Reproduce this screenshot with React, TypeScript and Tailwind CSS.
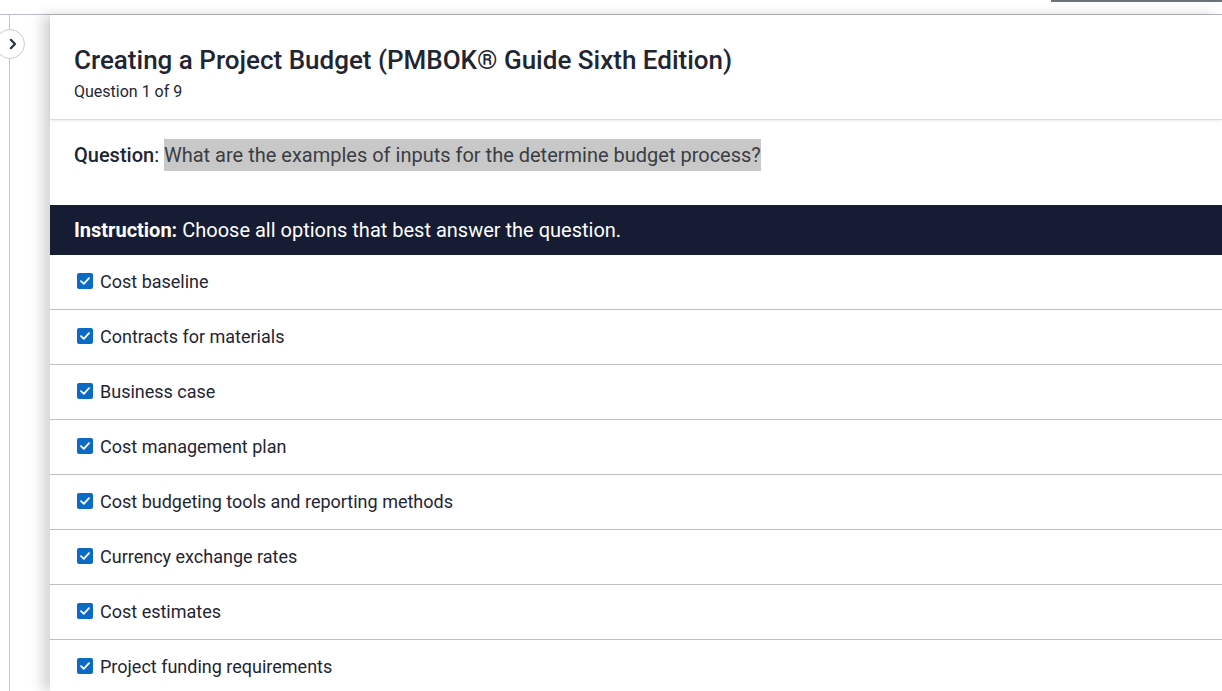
import React from "react";

const options = [
  "Cost baseline",
  "Contracts for materials",
  "Business case",
  "Cost management plan",
  "Cost budgeting tools and reporting methods",
  "Currency exchange rates",
  "Cost estimates",
  "Project funding requirements",
];

function Check() {
  return (
    <span className="flex h-[16px] w-[16px] shrink-0 items-center justify-center rounded-[2px] bg-[#0b6bc4]">
      <svg width="10" height="8" viewBox="0 0 10 8" fill="none">
        <path d="M1 4.2 L3.8 6.8 L9 1.2" stroke="white" strokeWidth="1.8" strokeLinecap="round" strokeLinejoin="round" />
      </svg>
    </span>
  );
}

export default function App() {
  return (
    <div className="relative h-[691px] w-[1222px] overflow-hidden bg-white font-['Roboto',sans-serif] text-[#1f2533]">
      <div className="absolute right-0 top-0 h-[2px] w-[171px] bg-[#6d7278]" />
      <div className="mt-[14px] flex h-[677px] border-t border-[#b8bcc6]">
        <div className="relative w-[50px] shrink-0 bg-white">
          <div className="absolute left-[9px] top-0 h-full w-px bg-[#c3c6cf]" />
          <div className="absolute left-[-5px] top-[14px] z-10 flex h-[30px] w-[30px] items-center justify-center rounded-full border border-[#c9ccd4] bg-white">
            <svg width="14" height="14" viewBox="0 0 14 14" fill="none" className="ml-[6px]">
              <path d="M4.8 2.8 L9 7 L4.8 11.2" stroke="#2a3040" strokeWidth="2.2" strokeLinecap="round" strokeLinejoin="round" />
            </svg>
          </div>
        </div>
        <div className="relative flex min-w-0 flex-1 flex-col bg-white shadow-[-8px_0_12px_rgba(0,0,0,0.16)]">
          <div className="shrink-0 px-[24px] pt-[29px] pb-[17px] border-b border-[#dcdde1] shadow-[0_1px_3px_rgba(0,0,0,0.08)]">
            <h1 className="text-[26px] font-medium leading-[32px] text-[#1f2533]">
              Creating a Project Budget (PMBOK® Guide Sixth Edition)
            </h1>
            <p className="mt-[6px] text-[16px] leading-[20px] text-[#1f2533]">Question 1 of 9</p>
          </div>
          <div className="shrink-0 px-[24px] pt-[20px] pb-[35px] text-[20px] leading-[30px]">
            <span className="font-medium text-[#1f2533]">Question</span>
            <span className="text-[#1f2533]">: </span>
            <span className="bg-[#c8c8c8] py-[4px] text-[#3a3d44]">What are the examples of inputs for the determine budget process?</span>
          </div>
          <div className="flex h-[50px] shrink-0 items-center bg-[#161c33] px-[24px] text-[20px] text-white">
            <span className="font-bold">Instruction:</span>
            <span className="ml-[5px]">Choose all options that best answer the question.</span>
          </div>
          <div className="flex shrink-0 flex-col">
            {options.map((o) => (
              <div key={o} className="flex h-[55px] shrink-0 items-center gap-[7px] border-b border-[#bdbec3] px-[27px] pb-[2px]">
                <Check />
                <span className="text-[18px] text-[#1f2533]">{o}</span>
              </div>
            ))}
          </div>
        </div>
      </div>
    </div>
  );
}
